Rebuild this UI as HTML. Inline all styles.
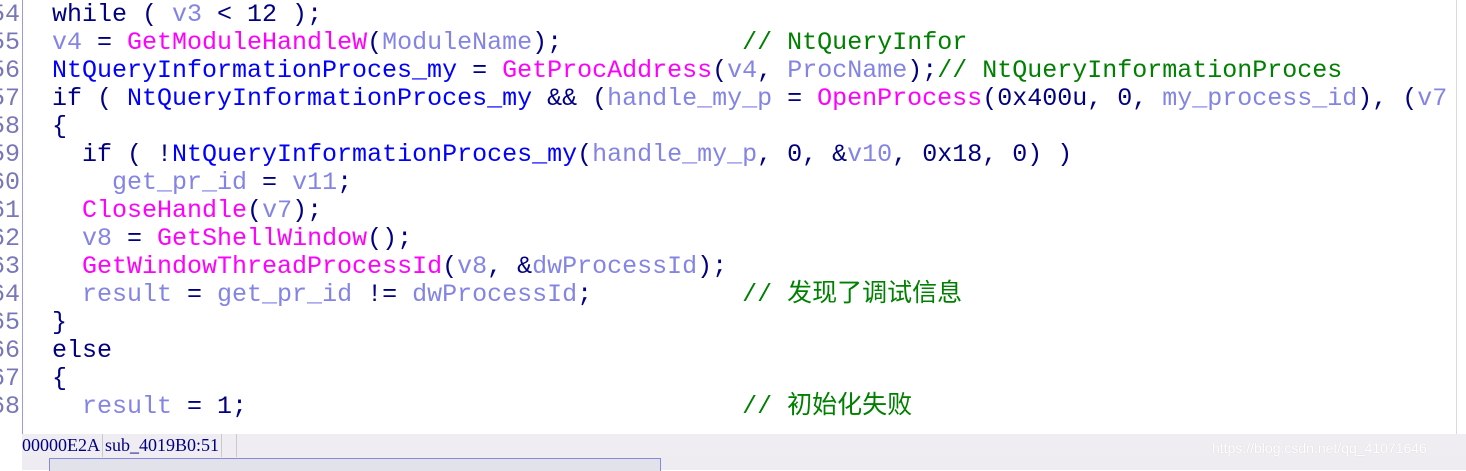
<!DOCTYPE html>
<html><head><meta charset="utf-8"><style>
body{margin:0;width:1466px;height:470px;background:#fff;overflow:hidden;position:relative;font-family:"Liberation Mono","Noto Sans CJK SC",monospace;}
#gut{position:absolute;left:0;top:0;width:22px;height:434px;border-right:1px solid #9a9ae0;overflow:hidden}
#gut pre{margin:0;position:absolute;right:2px;top:1px;font-size:25px;line-height:28px;color:#7878b8;text-align:right}
#code{position:absolute;left:52px;top:1px;width:1404px;height:433px;overflow:hidden}
#code pre{margin:0;font-size:25px;line-height:28px;color:#000080;white-space:pre}
.v{color:#8484e4}.f{color:#ff00ff}.g{color:#0000ff}.c{color:#008000}
#rb{position:absolute;left:1456px;top:0;width:1px;height:434px;background:#d8d8e8}
#st{position:absolute;left:22px;top:434px;width:1444px;height:23px;background:#efedf1;font-family:"Liberation Serif",serif;font-size:18px;color:#000080;line-height:23px;white-space:nowrap}
#st span{display:inline-block;border-right:1px solid #c8c8d0;padding:0 2px 0 0}
#sb{position:absolute;left:22px;top:457px;width:1444px;height:13px;background:#eeecf0}
#th{position:absolute;left:27px;top:1px;width:610px;height:12px;background:#e2e2ea;border:1px solid #8888e0;border-bottom:none}
#wm{position:absolute;left:1212px;top:440px;color:#fff;font-family:"Liberation Sans",sans-serif;font-size:14px;text-shadow:0 0 1px #ccc}
</style></head><body>
<div id="gut"><pre>54
55
56
57
58
59
60
61
62
63
64
65
66
67
68</pre></div>
<div id="code"><pre>while ( <span class="v">v3</span> &lt; 12 );
<span class="v">v4</span> = <span class="f">GetModuleHandleW</span>(<span class="v">ModuleName</span>);            <span class="c">// NtQueryInfor</span>
<span class="g">NtQueryInformationProces_my</span> = <span class="f">GetProcAddress</span>(<span class="v">v4</span>, <span class="v">ProcName</span>);<span class="c">// NtQueryInformationProces</span>
if ( <span class="g">NtQueryInformationProces_my</span> &amp;&amp; (<span class="v">handle_my_p</span> = <span class="f">OpenProcess</span>(0x400u, 0, <span class="v">my_process_id</span>), (<span class="v">v7</span>
{
  if ( !<span class="g">NtQueryInformationProces_my</span>(<span class="v">handle_my_p</span>, 0, &amp;<span class="v">v10</span>, 0x18, 0) )
    <span class="v">get_pr_id</span> = <span class="v">v11</span>;
  <span class="f">CloseHandle</span>(<span class="v">v7</span>);
  <span class="v">v8</span> = <span class="f">GetShellWindow</span>();
  <span class="f">GetWindowThreadProcessId</span>(<span class="v">v8</span>, &amp;<span class="v">dwProcessId</span>);
  <span class="v">result</span> = <span class="v">get_pr_id</span> != <span class="v">dwProcessId</span>;          <span class="c">// 发现了调试信息</span>
}
else
{
  <span class="v">result</span> = 1;                                 <span class="c">// 初始化失败</span></pre></div>
<div id="rb"></div>
<div id="st"><span>00000E2A</span><span style="padding-left:2px">sub_4019B0:51</span><span style="width:12px">&nbsp;</span></div>
<div id="wm">https://blog.csdn.net/qq_41071646</div>
<div id="sb"><div id="th"></div></div>
</body></html>
